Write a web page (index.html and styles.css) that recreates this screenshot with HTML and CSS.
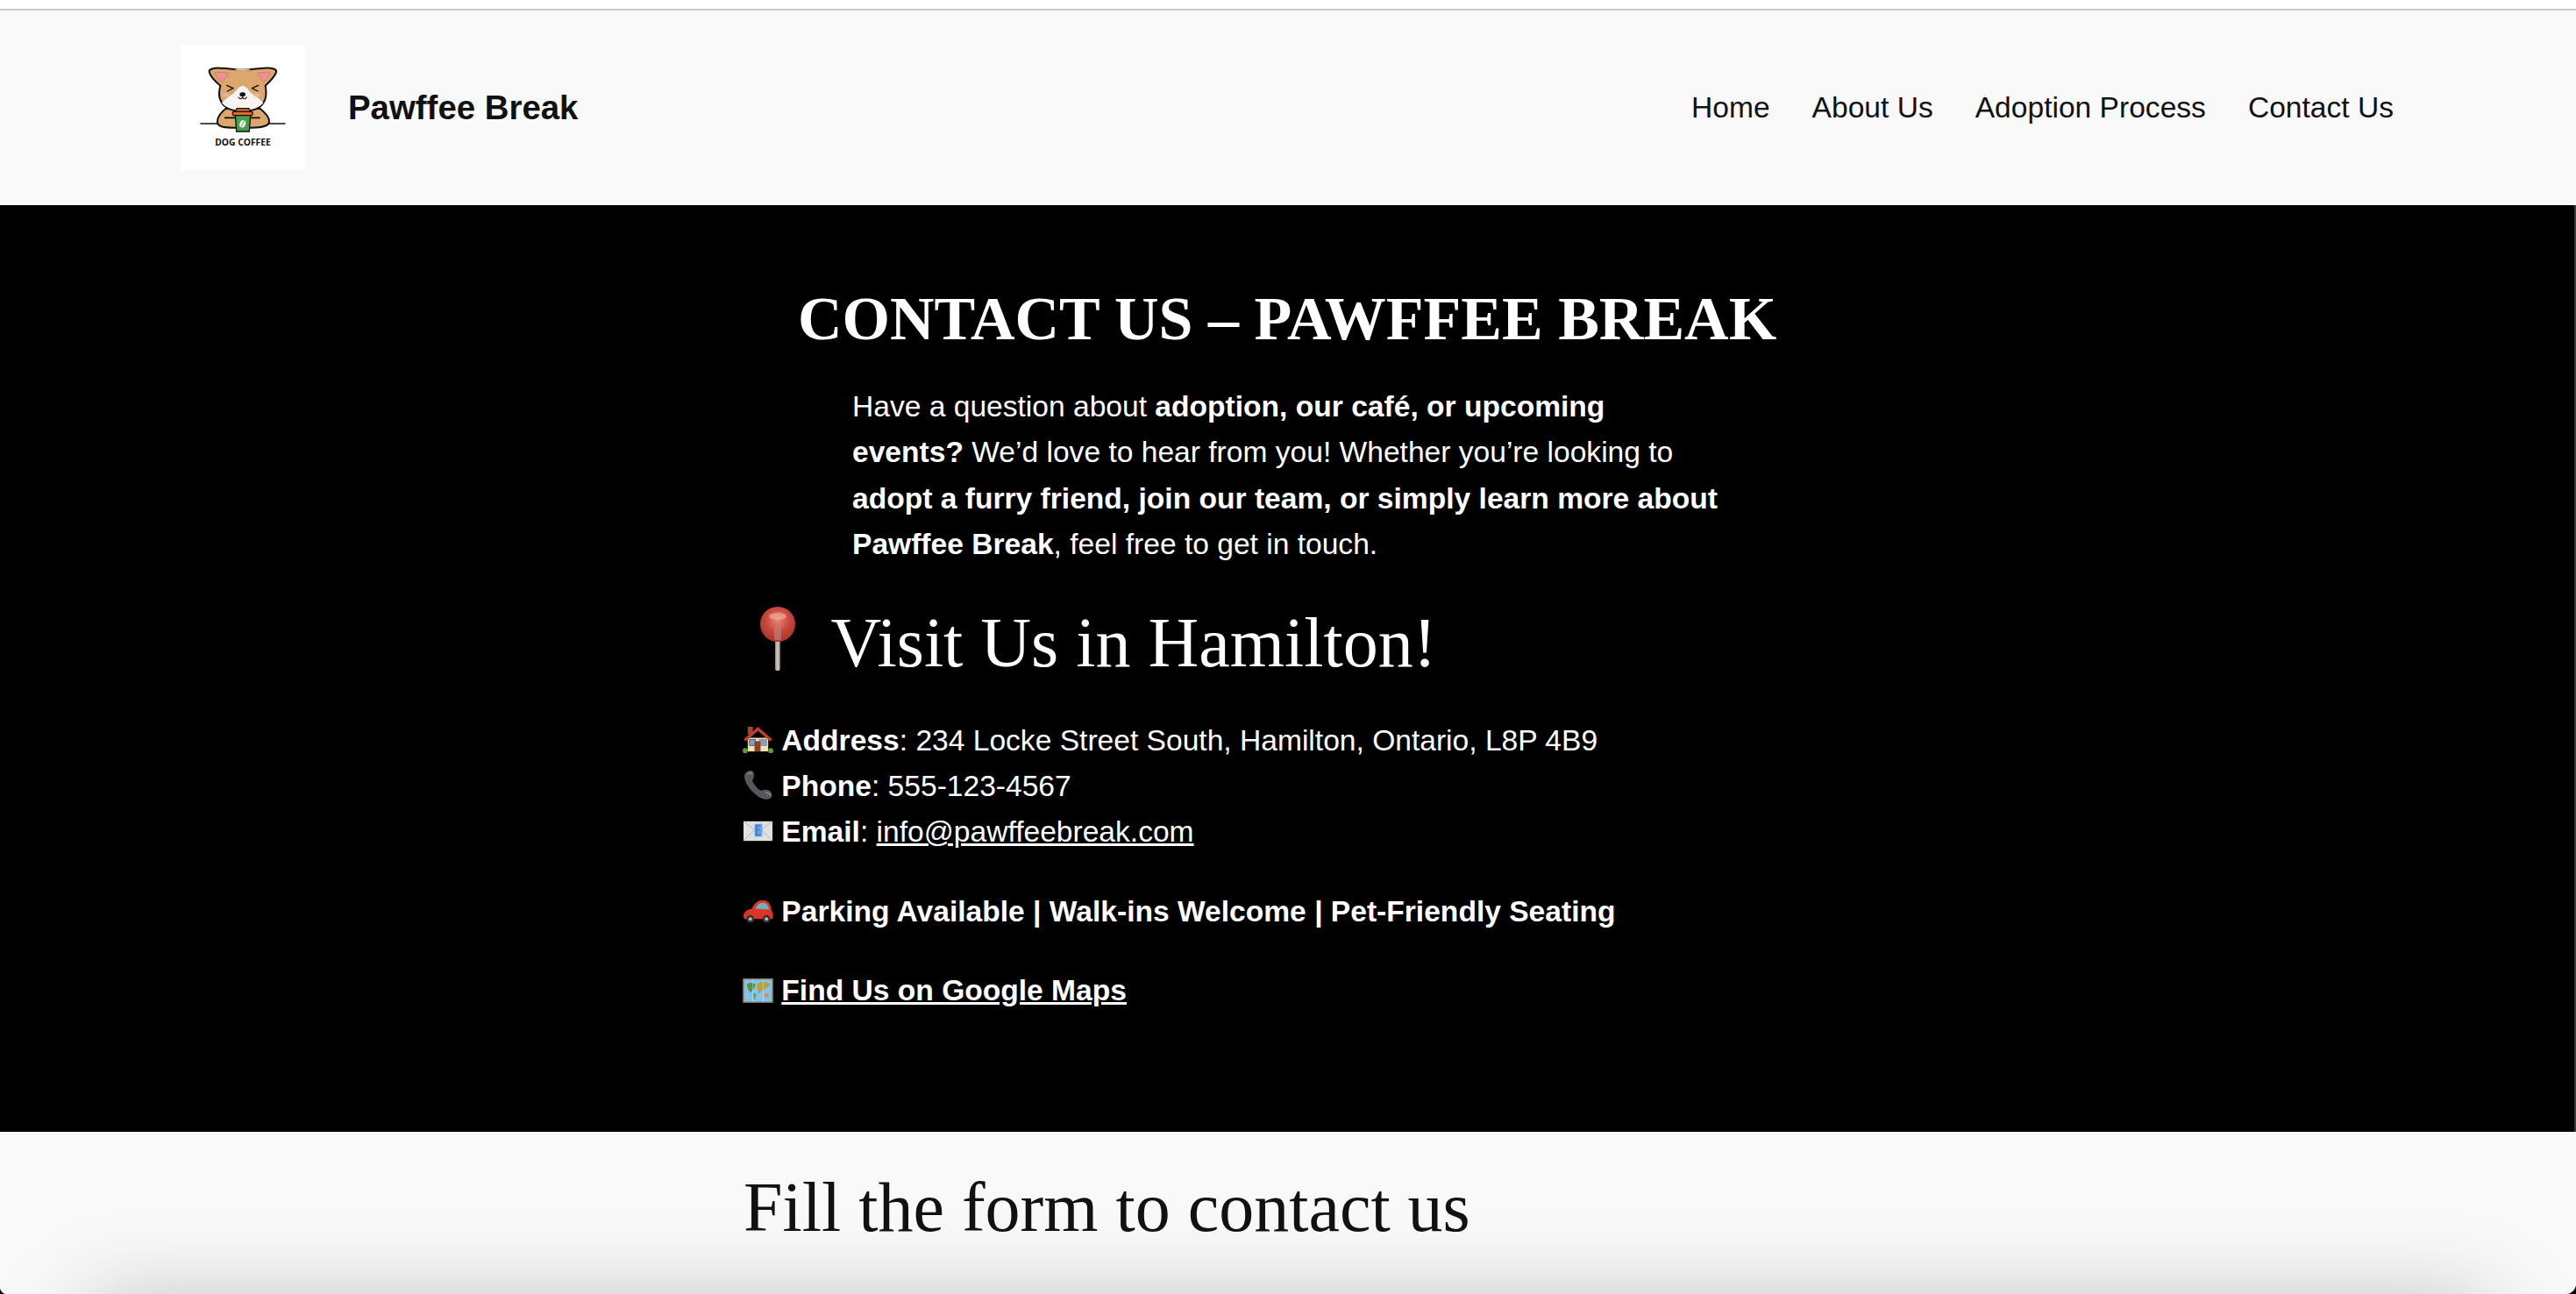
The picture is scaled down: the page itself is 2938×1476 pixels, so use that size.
FILE: index.html
```html
<!DOCTYPE html>
<html lang="en">
<head>
  <meta charset="UTF-8">
  <title>Contact Us - Pawffee Break</title>
  <meta name="viewport" content="width=device-width, initial-scale=1.0">
  <link rel="stylesheet" href="styles.css">
</head>
<body>
  <div class="page">
    <div class="top-strip"></div>

    <header class="site-header">
      <div class="brand">
        <svg class="logo" viewBox="78 156 426 426" role="img" aria-label="Dog Coffee logo">
          <rect x="78" y="156" width="426" height="426" fill="#fff"/>
          <path d="M147 423H435" stroke="#111" stroke-width="5" stroke-linecap="round"/>
          <!-- arms and body -->
          <path d="M232 372C212 388 203 402 204 418C205 432 220 437 262 437H318C360 437 380 432 381 416C382 400 368 386 350 372Z" fill="#dda66c" stroke="#111" stroke-width="6"/>
          <!-- head -->
          <path d="M176 246C174 236 190 232 214 233C240 234 262 238 290 238C318 238 340 234 366 233C392 232 408 236 405 247C400 262 382 280 368 293C372 315 372 335 362 350C350 372 320 380 290 380C260 380 230 372 218 350C208 335 208 315 214 293C198 280 180 262 176 246Z" fill="#dda66c" stroke="#111" stroke-width="6"/>
          <path d="M262 237C272 243 308 243 318 237C306 234 274 234 262 237Z" fill="#eccba0"/>
          <path d="M290 293C275 296 268 312 256 322C240 332 228 342 219 352C232 370 260 377 290 377C320 377 348 370 361 352C352 342 340 332 324 322C312 312 305 296 290 293Z" fill="#f6f3f0"/>
          <path d="M194 248C208 246 228 248 242 250C236 262 226 272 218 282C208 272 198 260 194 248Z" fill="#f08f98" stroke="#a8763f" stroke-width="1.5"/>
          <path d="M386 248C372 246 352 248 340 250C346 262 356 272 362 282C372 272 382 260 386 248Z" fill="#f08f98" stroke="#a8763f" stroke-width="1.5"/>
          <ellipse cx="232" cy="325" rx="12" ry="6" fill="#eab3a0"/>
          <ellipse cx="340" cy="325" rx="12" ry="6" fill="#eab3a0"/>
          <path d="M236 292L258 302L238 312M344 292L322 302L342 312" fill="none" stroke="#111" stroke-width="4" stroke-linecap="round" stroke-linejoin="round"/>
          <ellipse cx="290" cy="323" rx="10" ry="7" fill="#111"/>
          <path d="M276 333C282 341 288 339 290 332C292 339 298 341 304 333" fill="none" stroke="#111" stroke-width="3.5" stroke-linecap="round"/>
          <!-- coffee cup -->
          <path d="M228 403H350" stroke="#111" stroke-width="5"/>
          <path d="M265 394H317L313 450H269Z" fill="#45a049" stroke="#111" stroke-width="4"/>
          <rect x="256" y="382" width="68" height="13" rx="4" fill="#e2672c" stroke="#111" stroke-width="4"/>
          <path d="M266 382L270 371H312L316 382Z" fill="#d9622a" stroke="#111" stroke-width="3.5"/>
          <ellipse cx="290" cy="424" rx="10" ry="13" fill="#fff" transform="rotate(22 290 424)"/>
          <path d="M285 434C292 426 290 420 296 412" stroke="#45a049" stroke-width="3" fill="none"/>
          <text class="logo-text" x="291" y="498" text-anchor="middle">DOG COFFEE</text>
        </svg>
        <span class="brand-name">Pawffee Break</span>
      </div>
      <nav class="main-nav">
        <a href="#">Home</a>
        <a href="#">About Us</a>
        <a href="#">Adoption Process</a>
        <a href="#">Contact Us</a>
      </nav>
    </header>

    <section class="contact">
      <div class="container">
        <h1>CONTACT US – PAWFFEE BREAK</h1>
        <p class="intro">Have a question about <strong>adoption, our café, or upcoming events?</strong> We’d love to hear from you! Whether you’re looking to <strong>adopt a furry friend, join our team, or simply learn more about Pawffee Break</strong>, feel free to get in touch.</p>

        <h2 class="visit-title">
          <svg class="emoji-big" viewBox="0 0 80 80" aria-hidden="true">
            <defs>
              <radialGradient id="pinBall" cx="50%" cy="38%" r="60%">
                <stop offset="0" stop-color="#e88a78"/>
                <stop offset="0.55" stop-color="#c9483c"/>
                <stop offset="1" stop-color="#a8362f"/>
              </radialGradient>
              <linearGradient id="pinStem" x1="0" x2="1" y1="0" y2="0">
                <stop offset="0" stop-color="#8a8078"/>
                <stop offset="0.5" stop-color="#e0d6cc"/>
                <stop offset="1" stop-color="#6f665e"/>
              </linearGradient>
            </defs>
            <rect x="37" y="34" width="6" height="39" rx="2" fill="url(#pinStem)"/>
            <circle cx="40" cy="20" r="20" fill="url(#pinBall)"/>
            <rect x="36" y="22" width="8" height="16" fill="#c47a78" opacity="0.7"/>
            <ellipse cx="40" cy="11" rx="10" ry="4" fill="#f0a898" opacity="0.7"/>
          </svg>
          Visit Us in Hamilton!
        </h2>

        <p class="details">
          <svg class="emoji" viewBox="0 0 36 36" aria-hidden="true">
            <rect x="6" y="3" width="6" height="9" fill="#a5432f"/>
            <path d="M6 16H30V32H6Z" fill="#f3dfb4"/>
            <path d="M18 3L1 18L4 20L18 8L32 20L35 18Z" fill="#b8402c"/>
            <rect x="8" y="18" width="7" height="7" fill="#6fa5d8" stroke="#7a5a3c"/>
            <rect x="20" y="18" width="8" height="7" fill="#6fa5d8" stroke="#a98a5e"/>
            <rect x="14" y="20" width="7" height="12" fill="#8a3f26"/>
            <circle cx="3" cy="31" r="3" fill="#5d9a3a"/>
            <circle cx="33" cy="31" r="3" fill="#5d9a3a"/>
          </svg>
          <strong>Address</strong>: 234 Locke Street South, Hamilton, Ontario, L8P 4B9<br>
          <svg class="emoji" viewBox="0 0 36 36" aria-hidden="true">
            <path d="M3 4C6 1 10 0 12 2C14 4 14 8 12 11C11 13 12 15 15 19C19 24 22 25 24 24C27 23 30 23 33 26C35 29 35 32 32 34C27 36 20 34 13 27C5 19 0 10 3 4Z" fill="#56585c"/>
            <path d="M6 5C8 3 10 3 11 5M27 27C30 27 32 28 33 31" stroke="#85878b" stroke-width="1.5" fill="none"/>
          </svg>
          <strong>Phone</strong>: 555-123-4567<br>
          <svg class="emoji" viewBox="0 0 36 36" aria-hidden="true">
            <rect x="1" y="7" width="34" height="23" fill="#dfe0e2"/>
            <path d="M1 7L18 20L35 7M1 30L14 17M35 30L22 17" stroke="#b4b6ba" fill="none"/>
            <rect x="14" y="10" width="9" height="15" fill="#6aa3e8"/>
            <path d="M21 12H16V17H20M16 17V23H21" stroke="#3f78c4" stroke-width="1.6" fill="none"/>
          </svg>
          <strong>Email</strong>: <a href="#">info@pawffeebreak.com</a>
        </p>

        <p class="details">
          <svg class="emoji" viewBox="0 0 36 36" aria-hidden="true">
            <path d="M1 25C1 20 5 17 11 16C14 9 18 6 24 6C30 6 33 11 34 18C36 21 36 25 35 28H2Z" fill="#d9352a"/>
            <path d="M15 16C17 11 20 9 24 9C28 9 30 12 31 17Z" fill="#6fb0bd"/>
            <circle cx="9" cy="28" r="4.5" fill="#333"/>
            <circle cx="9" cy="28" r="2" fill="#b8b8b8"/>
            <circle cx="28" cy="28" r="4.5" fill="#333"/>
            <circle cx="28" cy="28" r="2" fill="#b8b8b8"/>
          </svg>
          <strong>Parking Available | Walk-ins Welcome | Pet-Friendly Seating</strong>
        </p>

        <p class="details">
          <svg class="emoji" viewBox="0 0 36 36" aria-hidden="true">
            <rect x="1" y="6" width="34" height="27" fill="#7fc4ee" stroke="#9a8468" stroke-width="1.5"/>
            <path d="M5 12C9 9 14 10 15 13C14 17 11 18 10 22C7 20 5 16 5 12Z" fill="#5f8f3a"/>
            <path d="M12 22L16 24L14 31Z" fill="#6d9a3e"/>
            <path d="M17 11C22 8 29 9 32 12C31 16 27 16 25 19C23 17 22 22 20 23C17 20 17 15 17 11Z" fill="#b8a23c"/>
            <circle cx="28" cy="25" r="2.5" fill="#d98a3a"/>
            <path d="M12 6V33M24 6V33" stroke="#fff" stroke-opacity="0.35"/>
          </svg>
          <a href="#"><strong>Find Us on Google Maps</strong></a>
        </p>
      </div>
    </section>

    <section class="form-section">
      <div class="container">
        <h2>Fill the form to contact us</h2>
      </div>
      <div class="form-card"></div>
    </section>
  </div>
</body>
</html>
```

FILE: styles.css
```css
html, body {
  margin: 0;
  background: #000;
}

.page {
  height: 1476px;
  overflow: hidden;
  border-radius: 0 0 12px 8px;
  background: #fff;
  font-family: "Liberation Sans", Arial, sans-serif;
  color: #111;
}

.top-strip {
  height: 10px;
  background: #fff;
  border-bottom: 2px solid #ccc;
}

.site-header {
  display: flex;
  justify-content: space-between;
  align-items: center;
  padding: 40px 208px 40px 206px;
  background: #f9f9f9;
}

.brand {
  display: flex;
  align-items: center;
  gap: 49px;
}

.logo {
  display: block;
  width: 142px;
  height: 142px;
}

.logo-text {
  font-family: "Open Sans", sans-serif;
  font-size: 31px;
  font-weight: 700;
  fill: #111;
}

.brand-name {
  font-size: 38.4px;
  font-weight: 700;
}

.main-nav {
  display: flex;
  gap: 48px;
}

.main-nav a {
  font-size: 33.6px;
  color: #111;
  text-decoration: none;
}

.contact {
  background: #000;
  color: #fff;
  padding: 89px 0 96px;
  border-right: 2px solid #3a3a3a;
}

.container {
  width: 1242px;
  margin: 0 auto;
}

h1 {
  margin: 0 0 34px;
  font-family: "Liberation Serif", "Times New Roman", serif;
  font-size: 70px;
  font-weight: 700;
  line-height: 81px;
  text-align: center;
}

h2 {
  margin: 0;
  font-family: "Liberation Serif", "Times New Roman", serif;
  font-size: 80px;
  font-weight: 400;
  line-height: 92px;
}

.visit-title {
  margin-bottom: 40px;
}

.intro {
  margin: 0 124px 39px 125px;
  font-size: 33.6px;
  line-height: 52.4px;
}

.details {
  margin: 38px 0;
  font-size: 33.6px;
  line-height: 52.4px;
}

.details a {
  color: #fff;
}

.emoji {
  width: 35px;
  height: 35px;
  vertical-align: -5px;
}

.emoji-big {
  width: 80px;
  height: 80px;
  margin-right: 2px;
  vertical-align: -12px;
}

.form-section {
  background: #f9f9f9;
  padding-top: 40px;
}

.form-section h2 {
  color: #111;
}

.form-card {
  height: 300px;
  margin: 64px 100px 0;
  background: #fff;
  box-shadow: 0 0 100px rgba(0,0,0,0.25);
}
```
